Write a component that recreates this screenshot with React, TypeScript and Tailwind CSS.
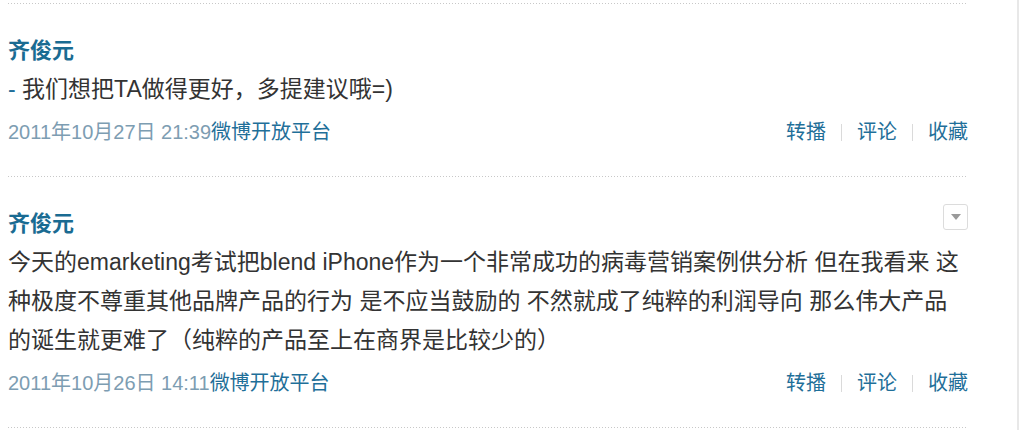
const posts = [
  {
    id: 1,
    author: "齐俊元",
    lines: ["- 我们想把TA做得更好，多提建议哦=)"],
    dash: true,
    time: "2011年10月27日 21:39",
    source: "微博开放平台",
    menu: false,
  },
  {
    id: 2,
    author: "齐俊元",
    lines: [
      "今天的emarketing考试把blend iPhone作为一个非常成功的病毒营销案例供分析 但在我看来 这种极度不尊重其他品牌产品的行为 是不应当鼓励的 不然就成了纯粹的利润导向 那么伟大产品的诞生就更难了（纯粹的产品至上在商界是比较少的）",
    ],
    dash: false,
    time: "2011年10月26日 14:11",
    source: "微博开放平台",
    menu: true,
  },
];

function DottedLine() {
  return (
    <div className="h-px w-full bg-[linear-gradient(to_right,#c8c8c8_1px,transparent_1px)] bg-[length:3px_1px]" />
  );
}

function Actions() {
  const items = ["转播", "评论", "收藏"];
  return (
    <div className="flex items-center gap-[15px] text-[20px] text-[#1f6f99]">
      {items.map((label, i) => (
        <div key={label} className="flex items-center gap-[15px]">
          {i > 0 && <span className="w-px h-[17px] bg-[#dadada]" />}
          <a className="cursor-pointer hover:underline">{label}</a>
        </div>
      ))}
    </div>
  );
}

function Post({ post }: { post: (typeof posts)[number] }) {
  return (
    <div>
      <DottedLine />
      <div className="pt-[28px] pb-[25px]">
        {/* author row */}
        <div className="flex justify-between items-start h-[38px]">
          <a className="leading-[38px] text-[22px] font-bold text-[#1a6b92]">
            {post.author}
          </a>
          {post.menu && (
            <button className="-mt-px w-[25px] h-[26px] border border-[#dcdcdc] rounded-[3px] flex items-center justify-center">
              <svg width="10" height="6" viewBox="0 0 10 6">
                <path d="M0 0h10L5 6z" fill="#9a9a9a" />
              </svg>
            </button>
          )}
        </div>

        {/* body */}
        <p className="text-[23px] leading-[39px] text-[#333]">
          {post.dash && <span className="text-[#1f6f99]">- </span>}
          {post.dash ? post.lines[0].slice(2) : post.lines[0]}
        </p>

        {/* footer */}
        <div className="mt-[4px] h-[38px] flex items-center justify-between">
          <div className="text-[20px]">
            <span className="text-[#7d9db2]">{post.time}</span>
            <a className="text-[#1f6f99]">{post.source}</a>
          </div>
          <Actions />
        </div>
      </div>
    </div>
  );
}

export default function App() {
  return (
    <div className="min-h-screen bg-white flex font-['Liberation_Sans','Noto_Sans_CJK_SC',sans-serif]">
      <div className="w-[1017px] pt-[3px] pl-[8px]">
        <div className="w-[960px]">
          {posts.map((p) => (
            <Post key={p.id} post={p} />
          ))}
          <DottedLine />
        </div>
      </div>
      <div className="w-[2px] bg-[#e8e8e8]" />
    </div>
  );
}
